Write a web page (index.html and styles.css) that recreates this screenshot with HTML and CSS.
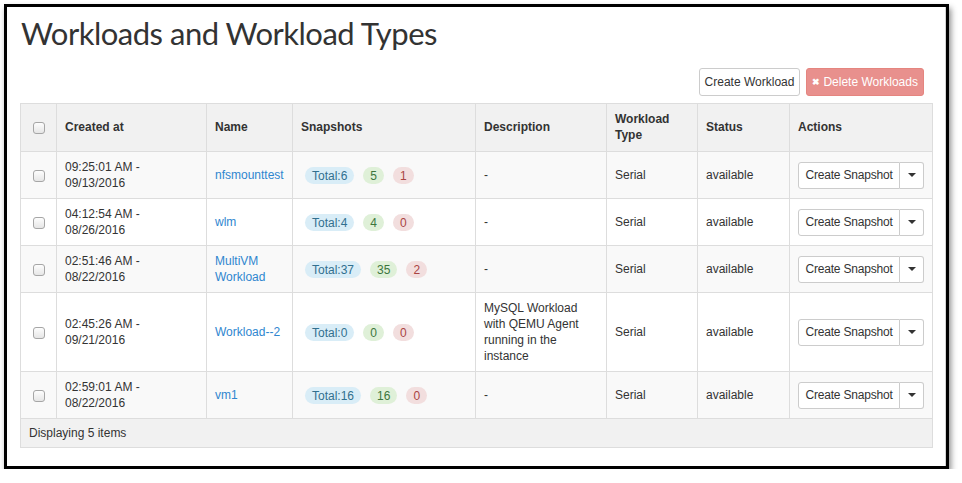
FILE: index.html
```html
<!DOCTYPE html>
<html>
<head>
<meta charset="utf-8">
<link rel="stylesheet" href="styles.css">
</head>
<body>
<div class="frame">
  <div class="inner">
    <h1 class="title">Workloads and Workload Types</h1>
    <div class="toolbar">
      <button class="btn btn-create">Create Workload</button>
      <button class="btn btn-danger"><span class="x">&#10006;</span> Delete Workloads</button>
    </div>
    <table class="grid">
      <colgroup>
        <col class="c-check"><col class="c-created"><col class="c-name"><col class="c-snap">
        <col class="c-desc"><col class="c-type"><col class="c-status"><col class="c-actions">
      </colgroup>
      <thead>
        <tr>
          <th class="chk"><span class="cb"></span></th>
          <th>Created at</th>
          <th>Name</th>
          <th>Snapshots</th>
          <th>Description</th>
          <th>Workload Type</th>
          <th>Status</th>
          <th>Actions</th>
        </tr>
      </thead>
      <tbody>
        <tr class="odd">
          <td class="chk"><span class="cb"></span></td>
          <td>09:25:01 AM - 09/13/2016</td>
          <td><a class="link">nfsmounttest</a></td>
          <td><div class="badges"><span class="badge b-info">Total:6</span><span class="badge b-ok">5</span><span class="badge b-err">1</span></div></td>
          <td>-</td>
          <td>Serial</td>
          <td>available</td>
          <td><div class="split"><span class="split-main">Create Snapshot</span><span class="split-caret"><span class="caret"></span></span></div></td>
        </tr>
        <tr>
          <td class="chk"><span class="cb"></span></td>
          <td>04:12:54 AM - 08/26/2016</td>
          <td><a class="link">wlm</a></td>
          <td><div class="badges"><span class="badge b-info">Total:4</span><span class="badge b-ok">4</span><span class="badge b-err">0</span></div></td>
          <td>-</td>
          <td>Serial</td>
          <td>available</td>
          <td><div class="split"><span class="split-main">Create Snapshot</span><span class="split-caret"><span class="caret"></span></span></div></td>
        </tr>
        <tr class="odd">
          <td class="chk"><span class="cb"></span></td>
          <td>02:51:46 AM - 08/22/2016</td>
          <td><a class="link">MultiVM Workload</a></td>
          <td><div class="badges"><span class="badge b-info">Total:37</span><span class="badge b-ok">35</span><span class="badge b-err">2</span></div></td>
          <td>-</td>
          <td>Serial</td>
          <td>available</td>
          <td><div class="split"><span class="split-main">Create Snapshot</span><span class="split-caret"><span class="caret"></span></span></div></td>
        </tr>
        <tr>
          <td class="chk"><span class="cb"></span></td>
          <td>02:45:26 AM - 09/21/2016</td>
          <td><a class="link nowrap">Workload--2</a></td>
          <td><div class="badges"><span class="badge b-info">Total:0</span><span class="badge b-ok">0</span><span class="badge b-err">0</span></div></td>
          <td>MySQL Workload with QEMU Agent running in the instance</td>
          <td>Serial</td>
          <td>available</td>
          <td><div class="split"><span class="split-main">Create Snapshot</span><span class="split-caret"><span class="caret"></span></span></div></td>
        </tr>
        <tr class="odd">
          <td class="chk"><span class="cb"></span></td>
          <td>02:59:01 AM - 08/22/2016</td>
          <td><a class="link">vm1</a></td>
          <td><div class="badges"><span class="badge b-info">Total:16</span><span class="badge b-ok">16</span><span class="badge b-err">0</span></div></td>
          <td>-</td>
          <td>Serial</td>
          <td>available</td>
          <td><div class="split"><span class="split-main">Create Snapshot</span><span class="split-caret"><span class="caret"></span></span></div></td>
        </tr>
      </tbody>
      <tfoot>
        <tr>
          <td colspan="8" class="foot">Displaying 5 items</td>
        </tr>
      </tfoot>
    </table>
  </div>
</div>
</body>
</html>
```

FILE: styles.css
```css
html, body {
  margin: 0;
  padding: 0;
  background: #fff;
}
body {
  padding: 4px 0 0 4px;
  font-family: "Liberation Sans", Arial, sans-serif;
  font-size: 12px;
  color: #333;
}
.frame {
  width: 939px;
  height: 459px;
  border: 3px solid #000;
  box-shadow: 2px 4px 6px rgba(0, 0, 0, 0.45);
  background: #fff;
}
.inner {
  height: 459px;
  box-sizing: border-box;
  padding: 6px 13px 0 13px;
  border-right: 1px solid #d4d4d4;
}
.title {
  margin: 0;
  font-family: Lato, "Open Sans", sans-serif;
  font-weight: 400;
  font-size: 31px;
  letter-spacing: -0.5px;
  line-height: 40px;
  color: #333;
  padding-left: 1px;
}
.toolbar {
  display: flex;
  justify-content: flex-end;
  gap: 6px;
  margin-top: 15px;
  padding-right: 8px;
  margin-bottom: 7px;
}
.btn {
  height: 28px;
  box-sizing: border-box;
  border: 1px solid #ccc;
  border-radius: 3px;
  background: #fff;
  color: #333;
  font-family: "Liberation Sans", Arial, sans-serif;
  font-size: 12px;
  padding: 0;
  margin: 0;
}
.btn-create { width: 101px; }
.btn-danger {
  width: 118px;
  background: #e8908d;
  border-color: #e5857f;
  color: #fff;
}
.x {
  font-size: 9px;
  font-weight: bold;
  position: relative;
  top: -1px;
}
.grid {
  width: 912px;
  table-layout: fixed;
  border-collapse: collapse;
  border: 1px solid #ddd;
}
.c-check { width: 36px; }
.c-created { width: 150px; }
.c-name { width: 86px; }
.c-snap { width: 183px; }
.c-desc { width: 131px; }
.c-type { width: 91px; }
.c-status { width: 92px; }
.c-actions { width: 143px; }
.grid th, .grid td {
  border: 1px solid #ddd;
  padding: 7px 8px;
  line-height: 16px;
  text-align: left;
  vertical-align: middle;
}
.grid th {
  background: #f1f1f1;
  font-weight: bold;
  padding-top: 7px;
  padding-bottom: 8px;
}
.grid tbody tr { background: #fff; }
.grid tbody tr.odd { background: #f9f9f9; }
.grid tbody td { height: 32px; }
.grid .chk {
  text-align: center;
  padding: 0;
}
.cb {
  display: inline-block;
  width: 10px;
  height: 10px;
  border: 1px solid #a6a6a6;
  border-radius: 3px;
  background: linear-gradient(#fdfdfd, #e6e6e6);
  vertical-align: middle;
}
.link {
  color: #2f86cf;
  text-decoration: none;
}
.nowrap { white-space: nowrap; }
.badges {
  display: flex;
  gap: 9px;
  margin-left: 4px;
}
.badge {
  display: inline-block;
  height: 17px;
  line-height: 18px;
  padding: 0 7px;
  border-radius: 9px;
  font-size: 12px;
}
.b-info { background: #d9edf7; color: #31708f; }
.b-ok { background: #dff0d8; color: #3c763d; }
.b-err { background: #f2dede; color: #a94442; }
.split {
  display: flex;
  height: 27px;
  width: 126px;
}
.split-main {
  display: flex;
  align-items: center;
  justify-content: center;
  width: 102px;
  box-sizing: border-box;
  border: 1px solid #ccc;
  border-radius: 3px 0 0 3px;
  background: #fff;
  font-size: 12px;
  letter-spacing: -0.2px;
}
.split-caret {
  display: flex;
  align-items: center;
  justify-content: center;
  width: 24px;
  box-sizing: border-box;
  border: 1px solid #ccc;
  border-left: 0;
  border-radius: 0 3px 3px 0;
  background: #fff;
}
.caret {
  width: 0;
  height: 0;
  border-left: 4px solid transparent;
  border-right: 4px solid transparent;
  border-top: 4px solid #333;
}
.grid td.foot {
  background: #f1f1f1;
  padding: 6px 8px;
  height: auto;
}
```
